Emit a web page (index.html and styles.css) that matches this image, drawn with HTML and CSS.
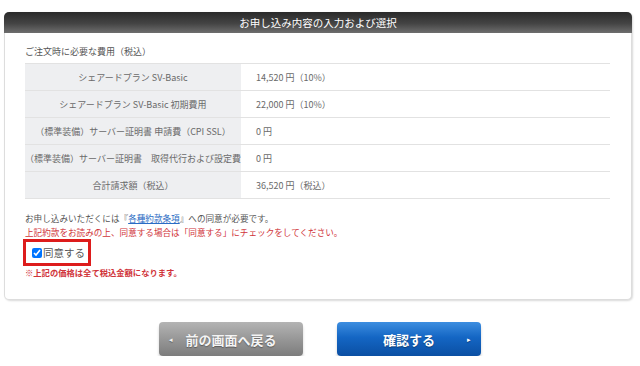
FILE: index.html
```html
<!DOCTYPE html>
<html lang="ja">
<head>
    <meta charset="UTF-8">
    <meta name="viewport" content="width=device-width, initial-scale=1.0">
    <title>お申し込み内容の入力および選択</title>
    <link rel="stylesheet" href="styles.css">
</head>
<body>
    <div class="panel">
        <h2 class="panel-title">お申し込み内容の入力および選択</h2>
        <div class="panel-body">
            <p class="section-title">ご注文時に必要な費用（税込）</p>
            <table class="fees">
                <tr>
                    <th>シェアードプラン SV-Basic</th>
                    <td>14,520 円（10%）</td>
                </tr>
                <tr>
                    <th>シェアードプラン SV-Basic 初期費用</th>
                    <td>22,000 円（10%）</td>
                </tr>
                <tr>
                    <th>（標準装備）サーバー証明書 申請費（CPI SSL）</th>
                    <td>0 円</td>
                </tr>
                <tr>
                    <th>（標準装備）サーバー証明書　取得代行および設定費</th>
                    <td>0 円</td>
                </tr>
                <tr>
                    <th>合計請求額（税込）</th>
                    <td>36,520 円（税込）</td>
                </tr>
            </table>

            <p class="notice">お申し込みいただくには『<a href="#">各種約款条項</a>』への同意が必要です。</p>
            <p class="notice red">上記約款をお読みの上、同意する場合は「同意する」にチェックをしてください。</p>
            <div class="agree-box">
                <label class="agree"><input type="checkbox" checked>同意する</label>
            </div>
            <p class="tax-note">※上記の価格は全て税込金額になります。</p>
        </div>
    </div>

    <div class="buttons">
        <button class="btn back"><span class="arrow">◂</span>前の画面へ戻る</button>
        <button class="btn confirm">確認する<span class="arrow">▸</span></button>
    </div>
</body>
</html>
```

FILE: styles.css
```css
body {
    margin: 0;
    padding: 12px 8px 0 4px;
    background-color: #ffffff;
    color: #555555;
    font-family: "Noto Sans CJK JP", "Noto Sans", sans-serif;
}
.panel {
    width: 626px;
    border: 1px solid #dddddd;
    border-top: none;
    border-radius: 5px;
    box-shadow: 1px 1px 2px rgba(0, 0, 0, 0.15);
    background-color: #ffffff;
}
.panel-title {
    margin: 0 -1px;
    height: 21px;
    line-height: 21px;
    text-align: center;
    font-size: 10.5px;
    font-weight: normal;
    color: #ffffff;
    background: linear-gradient(#2a2a2a, #444444 55%, #6e6e6e);
    border-radius: 5px 5px 0 0;
}
.panel-body {
    padding: 12px 20px 21px 20px;
}
.section-title {
    margin: 0 0 4px 0;
    font-size: 9px;
    line-height: 14px;
    color: #555555;
}
.fees {
    width: 585px;
    border-collapse: collapse;
    font-size: 9px;
}
.fees th,
.fees td {
    height: 26px;
    padding: 0;
    border-bottom: 1px solid #e2e2e2;
    font-weight: normal;
    color: #6a6a6a;
}
.fees tr:first-child th,
.fees tr:first-child td {
    border-top: 1px solid #e2e2e2;
}
.fees th {
    width: 210px;
    text-align: center;
    background-color: #eeeff1;
    white-space: nowrap;
}
.fees td {
    padding-left: 15px;
}
.notice {
    margin: 0;
    font-size: 8.6px;
    line-height: 14px;
    color: #555555;
}
.fees + .notice {
    margin-top: 12px;
}
.notice a {
    color: #2a6cc4;
}
.notice.red {
    color: #d0343a;
}
.agree-box {
    margin-top: 0;
    margin-left: -2px;
    width: 62px;
    height: 21px;
    border: 3px solid #dd1c1c;
}
.agree {
    display: flex;
    align-items: center;
    height: 21px;
    padding-left: 6px;
    font-size: 10.5px;
    color: #555555;
}
.agree input {
    margin: 0 1px 0 0;
    width: 10px;
    height: 10px;
}
.tax-note {
    margin: 0;
    font-size: 8.3px;
    line-height: 12px;
    font-weight: bold;
    color: #d0343a;
}
.buttons {
    display: flex;
    justify-content: center;
    gap: 34px;
    margin-top: 22px;
    padding-left: 4px;
}
.btn {
    position: relative;
    width: 144px;
    height: 34px;
    border: none;
    border-radius: 4px;
    font-family: "Noto Sans CJK JP", "Noto Sans", sans-serif;
    font-size: 13px;
    font-weight: bold;
    color: #ffffff;
    text-shadow: 0 1px 1px rgba(0, 0, 0, 0.35);
    box-shadow: 0 3px 3px rgba(0, 0, 0, 0.18);
    cursor: pointer;
}
.btn.back {
    background: linear-gradient(#b4b4b4, #9a9a9a 45%, #7c7c7c);
    color: #f4f4f4;
}
.btn.confirm {
    background: linear-gradient(#3d8ee0, #1466c4 45%, #0b4fa3);
}
.arrow {
    position: absolute;
    top: 50%;
    transform: translateY(-50%);
    font-size: 7px;
    font-weight: normal;
}
.back .arrow {
    left: 10px;
}
.confirm .arrow {
    right: 10px;
}
```
